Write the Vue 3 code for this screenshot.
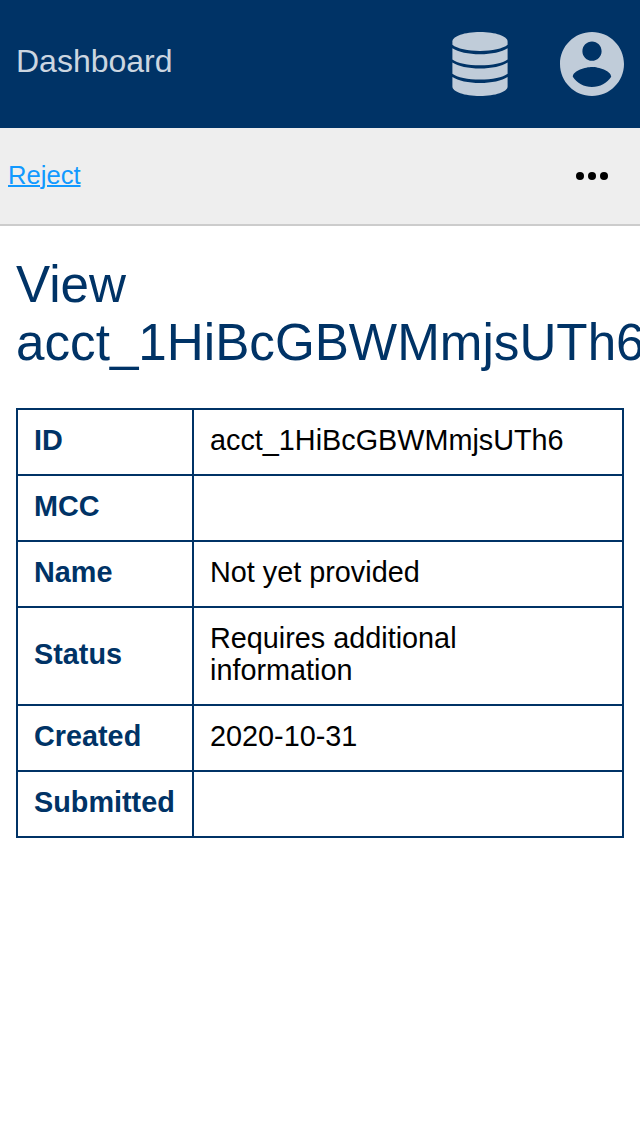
<script setup>
const rows = [
  { label: 'ID', value: 'acct_1HiBcGBWMmjsUTh6' },
  { label: 'MCC', value: '' },
  { label: 'Name', value: 'Not yet provided' },
  { label: 'Status', value: 'Requires additional information', tall: true },
  { label: 'Created', value: '2020-10-31' },
  { label: 'Submitted', value: '' },
]
</script>

<template>
  <div class="page">
    <header class="header">
      <span class="brand">Dashboard</span>
      <nav class="icons">
        <svg class="database" viewBox="0 0 56 64">
          <path d="M.4 9.500C.4 4.200 12.500 0 28 0s27.600 4.200 27.600 9.500v3.300C51 16.700 40 19 28 19S5 16.700.4 12.800z" />
          <path d="M.4 16.200C6 20 16.500 22.200 28 22.200S50 20 55.600 16.200v11.200C51 31 40 33.200 28 33.200S5 31 .4 27.400z" />
          <path d="M.4 30.600C6 34.400 16.500 36.600 28 36.600S50 34.400 55.600 30.600v11.200C51 45.400 40 47.600 28 47.600S5 45.400.4 41.800z" />
          <path d="M.4 44.900C6 48.700 16.500 50.900 28 50.900S50 48.700 55.600 44.900v9.600C55.600 59.800 43.500 64 28 64S.4 59.800.4 54.500z" />
        </svg>
        <svg class="account" viewBox="2 2 20 20">
          <path d="M12 2C6.480 2 2 6.480 2 12s4.480 10 10 10 10-4.480 10-10S17.520 2 12 2zm0 3c1.660 0 3 1.340 3 3s-1.340 3-3 3-3-1.340-3-3 1.340-3 3-3zm0 14.200c-2.500 0-4.710-1.280-6-3.220.03-1.990 4-3.080 6-3.080 1.990 0 5.970 1.090 6 3.080-1.290 1.940-3.500 3.220-6 3.220z" />
        </svg>
      </nav>
    </header>
    <div class="toolbar">
      <a class="reject" href="#">Reject</a>
      <svg class="more" viewBox="0 0 32 8">
        <circle cx="4" cy="4" r="4" /><circle cx="16" cy="4" r="4" /><circle cx="28" cy="4" r="4" />
      </svg>
    </div>
    <main class="content">
      <h1>View acct_1HiBcGBWMmjsUTh6</h1>
      <table>
        <tbody>
          <tr v-for="row in rows" :key="row.label" :class="{ tall: row.tall }">
            <th>{{ row.label }}</th>
            <td>{{ row.value }}</td>
          </tr>
        </tbody>
      </table>
    </main>
  </div>
</template>

<style>
body { background: #fff; overflow: hidden; }
</style>

<style scoped>
.page {
  height: 1136px;
  overflow: hidden;
  font-family: "Liberation Sans", Arial, sans-serif;
  color: #000;
}
.header {
  box-sizing: border-box;
  height: 128px;
  padding: 0 16px;
  display: flex;
  align-items: center;
  justify-content: space-between;
  background: #036;
  color: #ccd6e0;
}
.brand { font-size: 32px; line-height: 36px; padding-bottom: 6px; }
.icons { display: flex; gap: 52px; }
.icons svg { height: 64px; fill: #c0ccd9; }
.database { width: 56px; }
.account { width: 64px; }
.toolbar {
  box-sizing: border-box;
  height: 98px;
  padding: 0 32px 0 8px;
  display: flex;
  align-items: center;
  justify-content: space-between;
  background: #eee;
  border-bottom: 2px solid #ccc;
}
.reject { font-size: 25.6px; line-height: 30px; padding-bottom: 2px; color: #1199ff; text-decoration-thickness: 2px; }
.more { width: 32px; height: 8px; }
.content { padding: 30px 16px; }
h1 {
  margin: 0 0 36px;
  font-size: 51.2px;
  line-height: 58px;
  font-weight: 400;
  color: #036;
}
table {
  width: 608px;
  border-collapse: collapse;
  table-layout: fixed;
  font-size: 28.8px;
  line-height: 32px;
}
th, td {
  box-sizing: border-box;
  height: 66px;
  padding: 14px 16px 18px;
  border: 2px solid #036;
  text-align: left;
  vertical-align: middle;
}
.tall th, .tall td { height: 98px; }
th { width: 176px; color: #036; }
td { padding-right: 80px; }
</style>
